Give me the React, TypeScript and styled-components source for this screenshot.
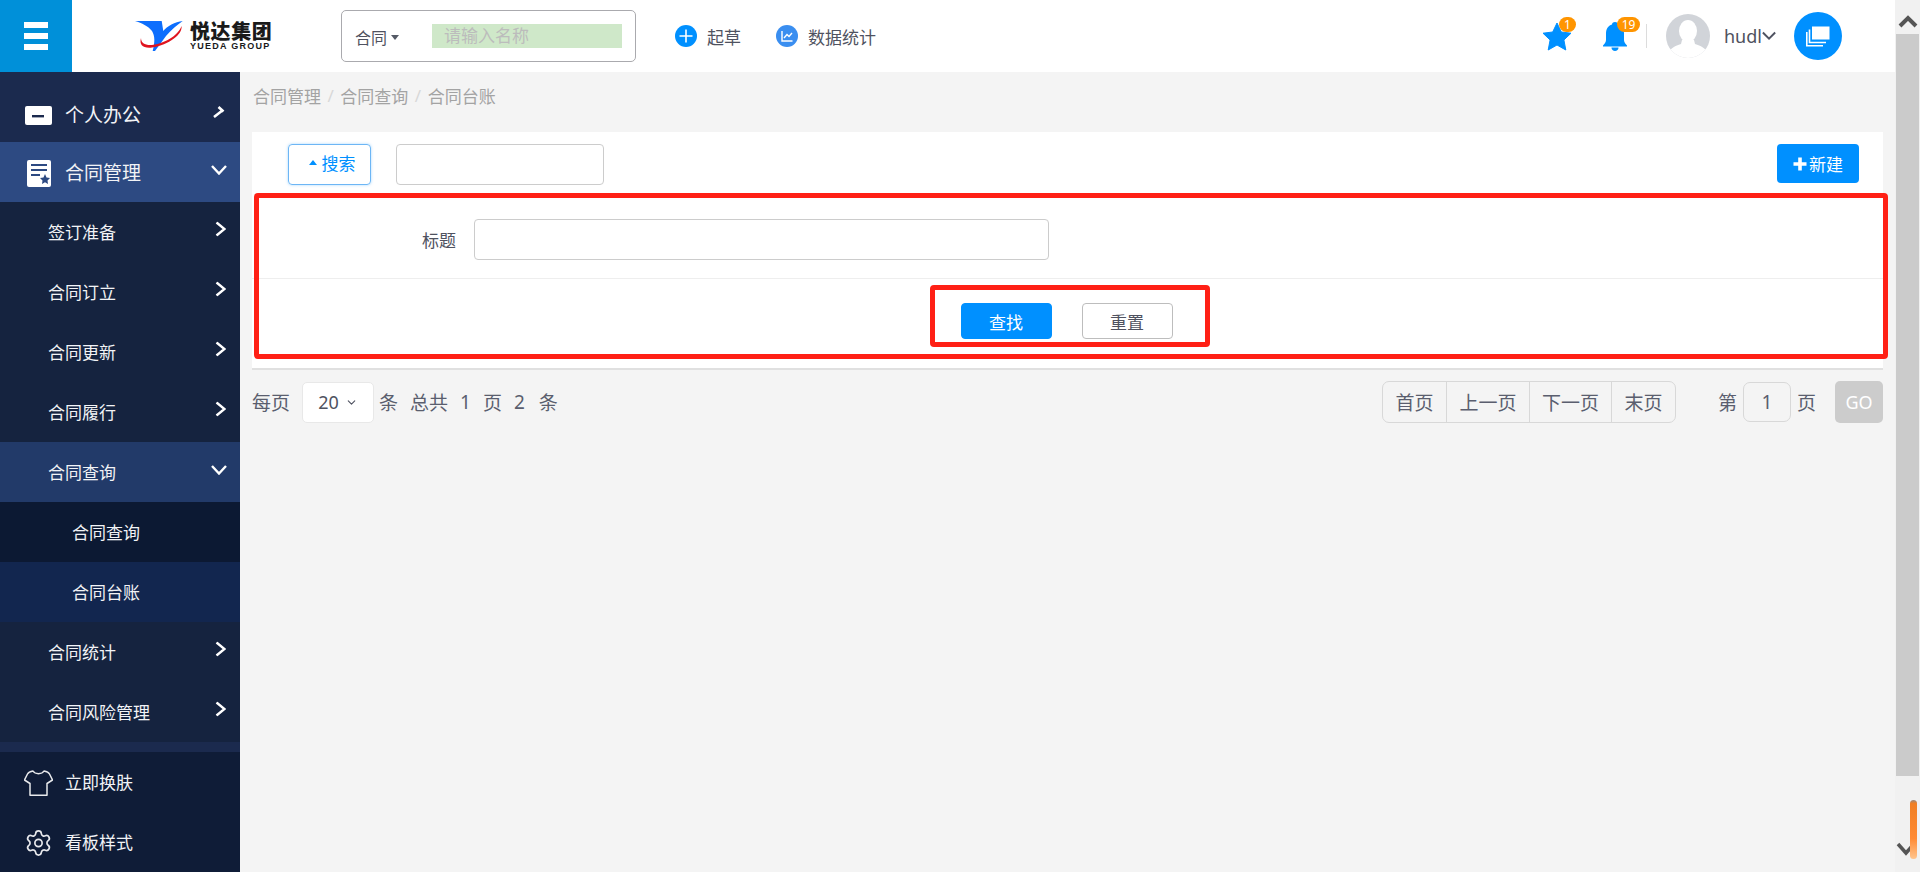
import React from "react";
import styled, { createGlobalStyle } from "styled-components";
import { ChevronDown, Settings } from "lucide-react";

const cjk = `"Noto Sans", "Noto Sans CJK SC", sans-serif`;

const GlobalStyle = createGlobalStyle`
  html, body { margin: 0; padding: 0; height: 100%; overflow: hidden; }
  body { font-family: ${cjk}; background: #f4f4f4; }
  * { box-sizing: border-box; }
`;

const Page = styled.div`
  display: flex;
  width: 1920px;
  height: 872px;
  overflow: hidden;
  position: relative;
`;

const Content = styled.div`
  flex: 1;
  min-width: 0;
  display: flex;
  flex-direction: column;
`;

const Topbar = styled.header`
  height: 72px;
  flex: none;
  background: #fff;
  display: flex;
  align-items: center;
`;

const MenuButton = styled.div`
  width: 72px;
  height: 72px;
  flex: none;
  background: #0090d9;
  display: flex;
  flex-direction: column;
  justify-content: center;
  align-items: center;
  gap: 5px;
`;

const MenuBar = styled.span`
  width: 24px;
  height: 6px;
  background: #fff;
`;

const Logo = styled.div`
  display: flex;
  align-items: center;
  gap: 3px;
  margin-left: 63px;
  width: 206px;
  flex: none;
`;

const LogoText = styled.div`
  display: flex;
  flex-direction: column;
  color: #1a1a1a;
`;

const LogoName = styled.div`
  font-family: "Noto Sans CJK SC", sans-serif;
  font-size: 20px;
  height: 20px;
  line-height: 20px;
  font-weight: 900;
  letter-spacing: 0.6px;
`;

const LogoLatin = styled.div`
  font-family: "Liberation Sans", sans-serif;
  font-size: 9px;
  height: 10px;
  line-height: 10px;
  font-weight: 700;
  letter-spacing: 1.25px;
  white-space: nowrap;
`;

const SearchBox = styled.div`
  width: 295px;
  height: 52px;
  flex: none;
  border: 1px solid #aaaaae;
  border-radius: 5px;
  display: flex;
  align-items: center;
  padding: 2px 13px 0 13px;
`;

const SearchType = styled.div`
  width: 77px;
  flex: none;
  font-size: 16px;
  color: #4f5260;
  display: flex;
  align-items: center;
  gap: 4px;
`;

const Caret = styled.span<{ $color: string; $up?: boolean }>`
  width: 0;
  height: 0;
  border-left: 4px solid transparent;
  border-right: 4px solid transparent;
  ${(p) => (p.$up ? "border-bottom" : "border-top")}: 5px solid ${(p) => p.$color};
`;

const SearchField = styled.div`
  width: 190px;
  height: 24px;
  margin-top: -2px;
  background: #cfe8c9;
  color: #bcbcbc;
  font-size: 17px;
  line-height: 24px;
  padding-left: 12px;
`;

const QuickLinks = styled.nav`
  display: flex;
  align-items: center;
  gap: 35px;
  margin-left: 39px;
`;

const QuickLink = styled.div`
  display: flex;
  align-items: center;
  gap: 10px;
  font-size: 17px;
  color: #4f5260;
`;

const RightTools = styled.div`
  margin-left: auto;
  margin-right: 53px;
  display: flex;
  align-items: center;
  height: 72px;
`;

const BadgeIcon = styled.div<{ $gap: number }>`
  position: relative;
  display: flex;
  margin-right: ${(p) => p.$gap}px;
`;

const Badge = styled.span<{ $left: number; $width: number }>`
  position: absolute;
  left: ${(p) => p.$left}px;
  top: -5px;
  width: ${(p) => p.$width}px;
  height: 15px;
  border-radius: 8px;
  background: #ff9500;
  color: #fff;
  font-size: 12px;
  line-height: 15px;
  text-align: center;
`;

const ToolDivider = styled.span`
  width: 1px;
  height: 24px;
  background: #dcdcdc;
  margin-right: 19px;
`;

const UserName = styled.div`
  display: flex;
  align-items: center;
  width: 52px;
  margin-left: 14px;
  margin-right: 18px;
  font-size: 18px;
  color: #4f5260;
`;

const RoundButton = styled.div`
  width: 48px;
  height: 48px;
  border-radius: 50%;
  background: #0090ff;
  display: flex;
  align-items: center;
  justify-content: center;
`;

const Body = styled.div`
  flex: 1;
  min-height: 0;
  display: flex;
`;

const Sidebar = styled.aside`
  width: 240px;
  flex: none;
  display: flex;
  flex-direction: column;
  background: #15233f;
  color: #fff;
`;

const NavRow = styled.div<{ $bg: string; $indent: number }>`
  height: 60px;
  flex: none;
  background: ${(p) => p.$bg};
  display: flex;
  align-items: center;
  padding-top: 2px;
  padding-left: ${(p) => p.$indent}px;
  position: relative;
`;

const ClippedNavRow = styled(NavRow)`
  height: 70px;
  padding-top: 16px;
`;

const NavLabel = styled.span<{ $size?: number }>`
  font-size: ${(p) => p.$size ?? 17}px;
  line-height: 24px;
  color: #f2f3f6;
`;

const NavIconSlot = styled.span`
  width: 29px;
  margin-left: 24px;
  margin-right: 12px;
  display: flex;
  justify-content: center;
  flex: none;
`;

const NavChevron = styled.span<{ $right: number; $shift: number }>`
  position: absolute;
  right: ${(p) => p.$right}px;
  top: 50%;
  transform: translateY(calc(-50% + ${(p) => p.$shift}px));
  display: flex;
`;

const Strip = styled.div`
  height: 10px;
  flex: none;
  background: #1b2a4e;
`;

const SideFooter = styled.div`
  flex: 1;
  background: #0f1c37;
  display: flex;
  flex-direction: column;
`;

const Main = styled.main`
  flex: 1;
  min-width: 0;
  padding: 0 12px 0 12px;
  background: #f4f4f4;
`;

const Crumbs = styled.div`
  height: 60px;
  display: flex;
  align-items: center;
  padding: 0 0 13px 1px;
  font-size: 17px;
  color: #a3a3a3;
  gap: 6.5px;
`;

const CrumbSlash = styled.span`
  color: #d8d8d8;
`;

const Card = styled.section`
  background: #fff;
  border-bottom: 2px solid #e0e0e0;
  position: relative;
`;

const CardToolbar = styled.div`
  height: 62px;
  display: flex;
  align-items: flex-start;
  padding: 12px 24px 0 36px;
`;

const ToggleButton = styled.div`
  width: 83px;
  height: 41px;
  border: 1px solid #6db6f5;
  border-radius: 4px;
  box-shadow: 0 0 3px rgba(0, 144, 255, 0.35);
  color: #0090ff;
  font-size: 17px;
  display: flex;
  align-items: center;
  justify-content: center;
  gap: 5px;
  padding: 0 0 4px 5px;
`;

const TextInput = styled.div<{ $width: number }>`
  width: ${(p) => p.$width}px;
  height: 41px;
  flex: none;
  border: 1px solid #cccccc;
  border-radius: 4px;
  background: #fff;
`;

const ToolbarInput = styled(TextInput)`
  margin-left: 25px;
`;

const NewButton = styled.div`
  margin-left: auto;
  width: 82px;
  height: 39px;
  background: #0090ff;
  border-radius: 4px;
  color: #fff;
  font-size: 17px;
  display: flex;
  align-items: center;
  justify-content: center;
  gap: 2px;
`;

const FormRow = styled.div`
  height: 85px;
  border-bottom: 1px solid #eeeeee;
  display: flex;
  align-items: flex-start;
  padding-top: 25px;
`;

const FormLabel = styled.label`
  width: 204px;
  height: 41px;
  flex: none;
  font-size: 17px;
  line-height: 43px;
  color: #4f5260;
  text-align: right;
  margin-right: 18px;
`;

const FormActions = styled.div`
  height: 89px;
  display: flex;
  justify-content: center;
  align-items: flex-start;
  gap: 30px;
  padding: 24px 2px 0 0;
`;

const ActionButton = styled.div<{ $primary?: boolean }>`
  width: 91px;
  height: 36px;
  border-radius: 4px;
  font-size: 17px;
  display: flex;
  align-items: center;
  justify-content: center;
  background: ${(p) => (p.$primary ? "#0090ff" : "#fff")};
  color: ${(p) => (p.$primary ? "#fff" : "#4f5260")};
  border: 1px solid ${(p) => (p.$primary ? "#0090ff" : "#bdbdbd")};
`;

const RedFrame = styled.div`
  position: absolute;
  left: 2px;
  right: -5px;
  top: 61px;
  height: 166px;
  border: 5px solid #ff2015;
  border-radius: 4px;
  pointer-events: none;
`;

const InnerRedFrame = styled.div`
  position: absolute;
  left: 678px;
  top: 153px;
  width: 280px;
  height: 62px;
  border: 5px solid #ff2015;
  border-radius: 4px;
  pointer-events: none;
`;

const Pager = styled.div`
  display: flex;
  align-items: center;
  height: 42px;
  margin-top: 11px;
  font-size: 19px;
  color: #5a5e6e;
`;

const PagerText = styled.span<{ $gap?: number }>`
  margin-left: ${(p) => p.$gap ?? 0}px;
  white-space: nowrap;
`;

const SizeSelect = styled.div`
  width: 72px;
  height: 41px;
  margin-left: 12px;
  margin-right: 5px;
  background: #fff;
  border: 1px solid #e8e8e8;
  border-radius: 5px;
  display: flex;
  align-items: center;
  justify-content: center;
  gap: 6px;
  font-size: 18px;
  color: #4f5260;
`;

const PageButtons = styled.div`
  display: flex;
  height: 42px;
  margin-left: auto;
  border: 1px solid #d8d8d8;
  border-radius: 7px;
`;

const PageButton = styled.div<{ $width: number }>`
  width: ${(p) => p.$width}px;
  display: flex;
  align-items: center;
  justify-content: center;
  & + & {
    border-left: 1px solid #d8d8d8;
  }
`;

const PageInput = styled.div`
  width: 48px;
  height: 40px;
  margin: 0 6px;
  border: 1px solid #d8d8d8;
  border-radius: 7px;
  display: flex;
  align-items: center;
  justify-content: center;
`;

const GoButton = styled.div`
  width: 48px;
  height: 42px;
  margin-left: 19px;
  background: #cccccc;
  border-radius: 5px;
  color: #fff;
  font-size: 18px;
  display: flex;
  align-items: center;
  justify-content: center;
`;

const ScrollTrack = styled.div`
  width: 25px;
  flex: none;
  background: #f1f1f1;
  display: flex;
  flex-direction: column;
  align-items: flex-end;
  position: relative;
`;

const ScrollArrow = styled.div`
  width: 25px;
  height: 34px;
  padding-top: 8px;
  display: flex;
  justify-content: center;
  align-items: center;
`;

const ScrollThumb = styled.div`
  width: 23px;
  margin-right: 1px;
  height: 742px;
  background: #cbcbcb;
`;

const ScrollDown = styled.div`
  position: absolute;
  left: 1px;
  top: 840px;
  display: flex;
`;

const OrangeGrip = styled.div`
  position: absolute;
  left: 15px;
  top: 800px;
  width: 7px;
  height: 59px;
  border-radius: 4px;
  background: linear-gradient(#9a8a7e 0, #f07f24 6%, #ff8a33 65%, #ffc58e 100%);
`;

const subItems = ["签订准备", "合同订立", "合同更新", "合同履行"];

const RightChevron = () => (
  <NavChevron $right={14} $shift={-3}>
    <svg width="11" height="15" viewBox="0 0 11 15" fill="none">
      <path d="M1.5 1 L9.5 7.5 L1.5 14" stroke="#fff" strokeWidth="2.4" />
    </svg>
  </NavChevron>
);

const OpenChevron = () => (
  <NavChevron $right={13} $shift={-2}>
    <svg width="16" height="10" viewBox="0 0 16 10" fill="none">
      <path d="M1 1 L8 8.5 L15 1" stroke="#fff" strokeWidth="2.4" />
    </svg>
  </NavChevron>
);

export default function App() {
  return (
    <Page>
      <GlobalStyle />
      <Content>
        <Topbar>
          <MenuButton>
            <MenuBar />
            <MenuBar />
            <MenuBar />
          </MenuButton>
          <Logo>
            <svg width="52" height="32" viewBox="0 0 52 32">
              <path d="M0 1 L26.7 1 L28.3 11 C32 6 40 2 47.7 1 C42 5 36 10 31 16 L20 31 L17.7 31 C20 22 20 16 17 11 C13 6 7 3 0 1 Z" fill="#0d6efd" />
              <path d="M46.5 6 C48 14 34 25 17 27.5 C8 28.5 4 25 6 18 C6 23 10 25.5 17 25 C32 23 44 14 46.5 6 Z" fill="#e0141e" />
            </svg>
            <LogoText>
              <LogoName>悦达集团</LogoName>
              <LogoLatin>YUEDA GROUP</LogoLatin>
            </LogoText>
          </Logo>
          <SearchBox>
            <SearchType>
              合同
              <Caret $color="#555a66" />
            </SearchType>
            <SearchField>请输入名称</SearchField>
          </SearchBox>
          <QuickLinks>
            <QuickLink>
              <svg width="22" height="22" viewBox="0 0 22 22">
                <circle cx="11" cy="11" r="11" fill="#0090ff" />
                <path d="M11 4.5 V17.5 M4.5 11 H17.5" stroke="#fff" strokeWidth="1.6" />
              </svg>
              起草
            </QuickLink>
            <QuickLink>
              <svg width="22" height="22" viewBox="0 0 22 22">
                <circle cx="11" cy="11" r="11" fill="#3a8ef0" />
                <path d="M6 6 V16 H16.5" stroke="#fff" strokeWidth="1.4" fill="none" />
                <path d="M8 13 L11 9.5 L13 11.5 L16 8" stroke="#fff" strokeWidth="1.4" fill="none" />
              </svg>
              数据统计
            </QuickLink>
          </QuickLinks>
          <RightTools>
            <BadgeIcon $gap={31}>
              <svg width="30" height="29" viewBox="0 0 30 29">
                <path d="M15 1 L19.3 10 L29 11.2 L21.9 18 L23.8 28 L15 23 L6.2 28 L8.1 18 L1 11.2 L10.7 10 Z" fill="#0090ff" stroke="#0090ff" strokeLinejoin="round" />
              </svg>
              <Badge $left={17} $width={17}>1</Badge>
            </BadgeIcon>
            <BadgeIcon $gap={19}>
              <svg width="24" height="29" viewBox="0 0 24 29">
                <path d="M12 0 C14 0 15 1 15 2.4 C19 3.6 21 7 21 11 L21 18 C21 20 22.5 22 24 23.5 L24 24.5 L0 24.5 L0 23.5 C1.5 22 3 20 3 18 L3 11 C3 7 5 3.6 9 2.4 C9 1 10 0 12 0 Z" fill="#0090ff" />
                <path d="M8.5 25.5 H15.5 C15.5 27.5 14 29 12 29 C10 29 8.5 27.5 8.5 25.5 Z" fill="#0090ff" />
              </svg>
              <Badge $left={14} $width={23}>19</Badge>
            </BadgeIcon>
            <ToolDivider />
            <svg width="44" height="44" viewBox="0 0 44 44">
              <defs>
                <clipPath id="avatar-clip">
                  <circle cx="22" cy="22" r="22" />
                </clipPath>
              </defs>
              <circle cx="22" cy="22" r="22" fill="#d1d4d9" />
              <g clipPath="url(#avatar-clip)" fill="#fff">
                <ellipse cx="22" cy="17" rx="9" ry="11" />
                <path d="M16 26 H28 L29 30 C35 32 39 34 41 38 L41 44 H3 L3 38 C5 34 9 32 15 30 Z" />
              </g>
            </svg>
            <UserName>
              hudl
              <svg width="16" height="10" viewBox="0 0 16 10" fill="none">
                <path d="M1 1 L8 8 L15 1" stroke="#4f5260" strokeWidth="2.2" />
              </svg>
            </UserName>
            <RoundButton>
              <svg width="24" height="21" viewBox="0 0 24 21" fill="none">
                <rect x="6" y="0.5" width="17.5" height="13" fill="#fff" />
                <path d="M3.5 3.5 V16.5 H20" stroke="#fff" strokeWidth="1.6" />
                <path d="M0.8 6 V19.7 H17" stroke="#fff" strokeWidth="1.6" />
              </svg>
            </RoundButton>
          </RightTools>
        </Topbar>
        <Body>
          <Sidebar>
            <ClippedNavRow $bg="#1b2a4e" $indent={0}>
              <NavIconSlot>
                <svg width="27" height="19" viewBox="0 0 27 19">
                  <rect width="27" height="19" rx="2" fill="#fff" />
                  <rect x="7" y="9" width="12" height="2.4" fill="#1b2a4e" />
                </svg>
              </NavIconSlot>
              <NavLabel $size={19}>个人办公</NavLabel>
              <NavChevron $right={15} $shift={5}>
                <svg width="12" height="12" viewBox="0 0 12 12" fill="none">
                  <path d="M1 11 L10 4 M5.5 1 L10.5 5.5" stroke="#fff" strokeWidth="2.6" />
                </svg>
              </NavChevron>
            </ClippedNavRow>
            <NavRow $bg="#2d4a82" $indent={0}>
              <NavIconSlot>
                <svg width="24" height="27" viewBox="0 0 24 27">
                  <rect width="24" height="27" rx="2" fill="#fff" />
                  <path d="M4 5 H20 M4 10 H20 M4 15 H13" stroke="#2d4a82" strokeWidth="2" />
                  <path d="M18 14 L19.5 17.5 L23 18 L20.5 20.5 L21 24 L18 22.3 L15 24 L15.5 20.5 L13 18 L16.5 17.5 Z" fill="#2d4a82" />
                </svg>
              </NavIconSlot>
              <NavLabel $size={19}>合同管理</NavLabel>
              <OpenChevron />
            </NavRow>
            {subItems.map((label) => (
              <NavRow key={label} $bg="#15233f" $indent={48}>
                <NavLabel>{label}</NavLabel>
                <RightChevron />
              </NavRow>
            ))}
            <NavRow $bg="#223a69" $indent={48}>
              <NavLabel>合同查询</NavLabel>
              <OpenChevron />
            </NavRow>
            <NavRow $bg="#0c1933" $indent={72}>
              <NavLabel>合同查询</NavLabel>
            </NavRow>
            <NavRow $bg="#12264f" $indent={72}>
              <NavLabel>合同台账</NavLabel>
            </NavRow>
            <NavRow $bg="#15233f" $indent={48}>
              <NavLabel>合同统计</NavLabel>
              <RightChevron />
            </NavRow>
            <NavRow $bg="#15233f" $indent={48}>
              <NavLabel>合同风险管理</NavLabel>
              <RightChevron />
            </NavRow>
            <Strip />
            <SideFooter>
              <NavRow $bg="#0f1c37" $indent={0}>
                <NavIconSlot>
                  <svg width="29" height="26" viewBox="0 0 29 26" fill="none">
                    <path d="M9 1 C11 4.5 18 4.5 20 1 C23 1.5 24.5 2 25.5 4 L28.5 10 L23 13.5 V25.2 H6 V13.5 L.5 10 L3.5 4 C4.5 2 6 1.5 9 1 Z" stroke="#e8e9ec" strokeWidth="1.5" strokeLinejoin="round" />
                  </svg>
                </NavIconSlot>
                <NavLabel>立即换肤</NavLabel>
              </NavRow>
              <NavRow $bg="#0f1c37" $indent={0}>
                <NavIconSlot>
                  <Settings size={34} strokeWidth={1.4} color="#e8e9ec" />
                </NavIconSlot>
                <NavLabel>看板样式</NavLabel>
              </NavRow>
            </SideFooter>
          </Sidebar>
          <Main>
            <Crumbs>
              <span>合同管理</span>
              <CrumbSlash>/</CrumbSlash>
              <span>合同查询</span>
              <CrumbSlash>/</CrumbSlash>
              <span>合同台账</span>
            </Crumbs>
            <Card>
              <CardToolbar>
                <ToggleButton>
                  <Caret $color="#0090ff" $up />
                  搜索
                </ToggleButton>
                <ToolbarInput $width={208} />
                <NewButton>
                  <svg width="14" height="14" viewBox="0 0 14 14">
                    <path d="M7 0.5 V13.5 M0.5 7 H13.5" stroke="#fff" strokeWidth="3.6" />
                  </svg>
                  新建
                </NewButton>
              </CardToolbar>
              <FormRow>
                <FormLabel>标题</FormLabel>
                <TextInput $width={575} />
              </FormRow>
              <FormActions>
                <ActionButton $primary>查找</ActionButton>
                <ActionButton>重置</ActionButton>
              </FormActions>
              <RedFrame />
              <InnerRedFrame />
            </Card>
            <Pager>
              <PagerText>每页</PagerText>
              <SizeSelect>
                20
                <ChevronDown size={13} strokeWidth={2} color="#4f5260" />
              </SizeSelect>
              <PagerText>条</PagerText>
              <PagerText $gap={12}>总共</PagerText>
              <PagerText $gap={12}>1</PagerText>
              <PagerText $gap={12}>页</PagerText>
              <PagerText $gap={12}>2</PagerText>
              <PagerText $gap={14}>条</PagerText>
              <PageButtons>
                <PageButton $width={63}>首页</PageButton>
                <PageButton $width={83}>上一页</PageButton>
                <PageButton $width={82}>下一页</PageButton>
                <PageButton $width={64}>末页</PageButton>
              </PageButtons>
              <PagerText $gap={42}>第</PagerText>
              <PageInput>1</PageInput>
              <PagerText>页</PagerText>
              <GoButton>GO</GoButton>
            </Pager>
          </Main>
        </Body>
      </Content>
      <ScrollTrack>
        <ScrollArrow>
          <svg width="20" height="14" viewBox="0 0 20 14" fill="none">
            <path d="M2 12 L10 4 L18 12" stroke="#555" strokeWidth="4" />
          </svg>
        </ScrollArrow>
        <ScrollThumb />
        <ScrollDown>
          <svg width="20" height="20" viewBox="0 0 20 20" fill="none">
            <path d="M2 4 L10 13 L18 4" stroke="#555" strokeWidth="3.5" />
          </svg>
        </ScrollDown>
        <OrangeGrip />
      </ScrollTrack>
    </Page>
  );
}
